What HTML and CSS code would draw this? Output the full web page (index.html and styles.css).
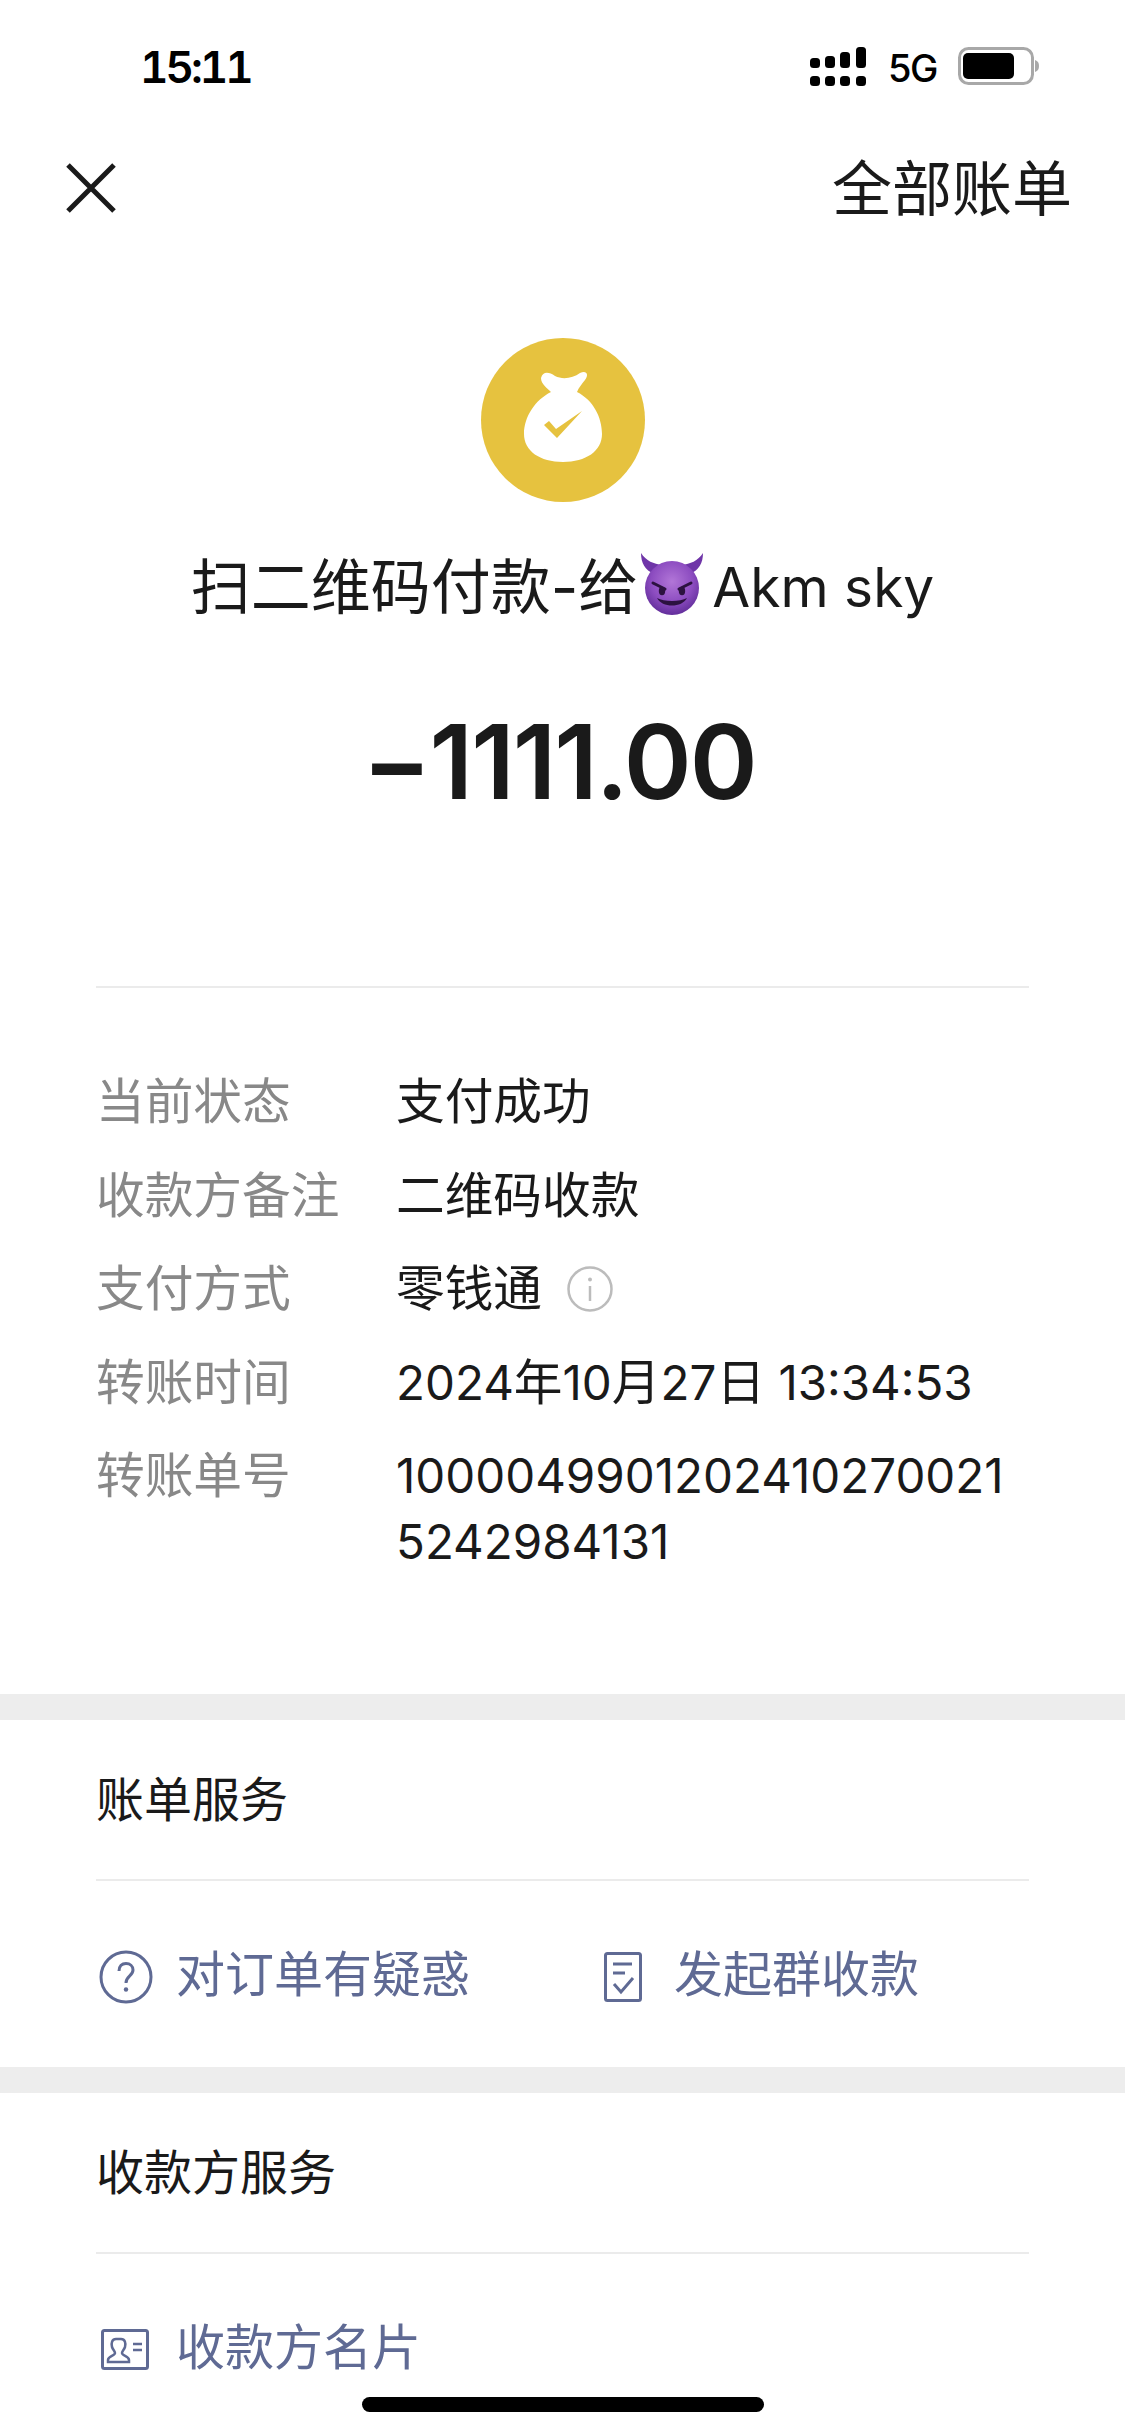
FILE: index.html
```html
<!DOCTYPE html>
<html lang="zh-CN">
<head>
<meta charset="utf-8">
<title>账单详情</title>
<link rel="stylesheet" href="styles.css">
</head>
<body>
<div class="page">
  <header class="status">
    <span class="time">15:11</span>
    <div class="status-right">
      <svg class="signal" width="58" height="40" viewBox="0 0 58 40">
        <g fill="#000">
          <rect x="0" y="11" width="10" height="10" rx="3.5"/><rect x="0" y="29" width="10" height="10" rx="3.5"/>
          <rect x="15" y="9" width="10" height="12" rx="3.5"/><rect x="15" y="29" width="10" height="10" rx="3.5"/>
          <rect x="30" y="5" width="10" height="16" rx="3.5"/><rect x="30" y="29" width="10" height="10" rx="3.5"/>
          <rect x="46" y="0" width="10" height="21" rx="3.5"/><rect x="46" y="29" width="10" height="10" rx="3.5"/>
        </g>
      </svg>
      <span class="net">5G</span>
      <svg class="battery" width="82" height="38" viewBox="0 0 82 38">
        <rect x="1.5" y="1.5" width="73" height="35" rx="9" fill="none" stroke="#a8a8a8" stroke-width="3"/>
        <rect x="5" y="6" width="51" height="26" rx="5" fill="#000"/>
        <path d="M77 13c3 1 4 3 4 6s-1 5-4 6z" fill="#a8a8a8"/>
      </svg>
    </div>
  </header>

  <nav class="nav">
    <svg class="close" width="50" height="50" viewBox="0 0 50 50">
      <path d="M2 2 48 48M48 2 2 48" stroke="#1a1a1a" stroke-width="5" fill="none"/>
    </svg>
    <span class="nav-link">全部账单</span>
  </nav>

  <section class="hero">
    <svg class="bag" width="164" height="164" viewBox="0 0 164 164">
      <circle cx="82" cy="82" r="82" fill="#e6c23f"/>
      <path d="M60 40C62 33 68 34 74 38 82 42 92 40 99 35 106 32 108 37 104 42 101 46 98 49 96 54 112 62 121 79 121 96 121 113 105 124 82 124 59 124 43 113 43 96 43 79 54 62 70 54 66 50 60 46 60 40Z" fill="#fff"/>
      <path d="M63 87 68 83 75 91 101 73 76 100Z" fill="#e6c23f"/>
    </svg>
    <h1 class="title">
      <span>扫二维码付款-给</span>
      <svg class="emoji" width="64" height="62" viewBox="0 0 64 62">
        <defs>
          <radialGradient id="face" cx="50%" cy="38%" r="65%">
            <stop offset="0" stop-color="#b276d8"/>
            <stop offset="0.6" stop-color="#8c4cc0"/>
            <stop offset="1" stop-color="#5d2a96"/>
          </radialGradient>
        </defs>
        <path d="M1 0C1 10 5 17 14 21L22 12C14 11 6 8 1 0ZM63 0C63 10 59 17 50 21L42 12C50 11 58 8 63 0Z" fill="#6f35a8"/>
        <ellipse cx="32" cy="35" rx="27" ry="27" fill="url(#face)"/>
        <path d="M13 30 25 36M51 30 39 36" stroke="#2c1240" stroke-width="3" stroke-linecap="round"/>
        <ellipse cx="22" cy="38" rx="3.2" ry="4.2" fill="#2c1240"/>
        <ellipse cx="42" cy="38" rx="3.2" ry="4.2" fill="#2c1240"/>
        <path d="M17 45C22 55 42 55 47 45 40 49 24 49 17 45Z" fill="#2c1240"/>
      </svg>
      <span class="title-latin">Akm sky</span>
    </h1>
    <div class="amount">−1111.00</div>
  </section>

  <section class="details">
    <dl class="info">
      <dt>当前状态</dt><dd>支付成功</dd>
      <dt>收款方备注</dt><dd>二维码收款</dd>
      <dt>支付方式</dt>
      <dd class="with-icon">零钱通
        <svg width="46" height="46" viewBox="0 0 46 46">
          <circle cx="23" cy="23" r="21.5" fill="none" stroke="#bcbcbc" stroke-width="2.5"/>
          <circle cx="23" cy="13.5" r="2" fill="#bcbcbc"/>
          <path d="M23 20v15" stroke="#bcbcbc" stroke-width="2.5"/>
        </svg>
      </dd>
      <dt>转账时间</dt><dd><span class="num">2024</span>年<span class="num">10</span>月<span class="num">27</span>日<span class="num"> 13:34:53</span></dd>
      <dt>转账单号</dt><dd class="num">10000499012024102700215242984131</dd>
    </dl>
  </section>

  <section class="service">
    <h2 class="service-title">账单服务</h2>
    <div class="actions">
      <a class="action">
        <svg width="54" height="54" viewBox="0 0 54 54">
          <circle cx="27" cy="27" r="25" fill="none" stroke="#5f6a94" stroke-width="3"/>
          <path d="M20 21C20 16 23 13.500 27 13.500 31 13.500 34 16 34 20 34 26 27 26 27 33" fill="none" stroke="#5f6a94" stroke-width="3"/>
          <circle cx="27" cy="39.500" r="2.200" fill="#5f6a94"/>
        </svg>
        <span>对订单有疑惑</span>
      </a>
      <a class="action">
        <svg class="icon-doc" width="38" height="50" viewBox="0 0 38 50">
          <rect x="1.500" y="1.500" width="35" height="47" rx="2" fill="none" stroke="#5f6a94" stroke-width="3"/>
          <path d="M9 12H28M9 21H21M10 32 17 40 29 26" fill="none" stroke="#5f6a94" stroke-width="3"/>
        </svg>
        <span>发起群收款</span>
      </a>
    </div>
  </section>

  <section class="service">
    <h2 class="service-title">收款方服务</h2>
    <div class="actions">
      <a class="action">
        <svg class="icon-card" width="48" height="41" viewBox="0 0 48 41">
          <rect x="1.500" y="1.500" width="45" height="38" rx="2" fill="none" stroke="#5f6a94" stroke-width="3"/>
          <path d="M15 10C11 10 10 14 11 18 12 21 14 22 14 24 14 27 7 27 7 31V33H28V31C28 27 21 27 21 24 21 22 23 21 24 18 25 14 24 10 20 10Z" fill="none" stroke="#5f6a94" stroke-width="2.500"/>
          <path d="M32 15H41M32 21H41" stroke="#5f6a94" stroke-width="2.500"/>
        </svg>
        <span>收款方名片</span>
      </a>
    </div>
  </section>

  <div class="home-bar"></div>
</div>
</body>
</html>
```

FILE: styles.css
```css
* { box-sizing: border-box; }
html, body { margin: 0; padding: 0; background: #fff; }
.page {
  position: relative;
  width: 1125px;
  height: 2436px;
  overflow: hidden;
  background: #fff;
  color: #1a1a1a;
  font-family: Inter, "Noto Sans CJK SC", sans-serif;
}

.status {
  height: 134px;
  padding: 47px 85px 0 140px;
  display: flex;
  justify-content: space-between;
  align-items: flex-start;
  color: #000;
}
.time {
  font-size: 44px;
  line-height: 40px;
  font-weight: 600;
  font-variant-numeric: tabular-nums;
  letter-spacing: -3px;
}
.status-right { display: flex; align-items: flex-start; }
.signal { display: block; margin-right: -2px; }
.net {
  margin: 6px 0 0 22px;
  width: 52px;
  font-size: 38px;
  line-height: 30px;
  font-weight: 500;
  letter-spacing: -1.5px;
}
.battery { display: block; margin-left: 18px; }

.nav {
  height: 110px;
  padding: 0 53px 0 66px;
  display: flex;
  justify-content: space-between;
  align-items: center;
}
.close { display: block; margin-top: -2px; }
.nav-link { font-size: 60px; line-height: 80px; font-weight: 400; }

.hero {
  height: 744px;
  padding-top: 94px;
  margin: 0 96px;
  border-bottom: 2px solid #ebebeb;
  display: flex;
  flex-direction: column;
  align-items: center;
}
.bag { display: block; flex: none; }
.title {
  margin: 45px 0 0;
  display: flex;
  align-items: center;
  justify-content: center;
  height: 80px;
  font-size: 60px;
  line-height: 80px;
  font-weight: 400;
  white-space: nowrap;
}
.emoji { display: block; margin: -7px 8px 0 2px; }
.title-latin { font-size: 55px; }
.amount {
  margin: 75px 7px 0 0;
  font-size: 103px;
  line-height: 120px;
  font-weight: 600;
  letter-spacing: -2px;
}

.details { height: 706px; padding: 81px 96px 0; }
.info {
  margin: 0;
  display: grid;
  grid-template-columns: 300px 1fr;
  row-gap: 27.5px;
  font-size: 48.7px;
  line-height: 66px;
}
.info dt { color: #888; }
.info dd { margin: 0; word-break: break-all; }
.num { font-size: 47.5px; }
.with-icon { display: flex; align-items: center; gap: 25px; }
.with-icon svg { display: block; }

.service { border-top: 26px solid #ededed; }
.service-title {
  margin: 0 96px;
  height: 161px;
  border-bottom: 2px solid #ebebeb;
  font-size: 48px;
  line-height: 159px;
  font-weight: 400;
}
.actions {
  height: 186px;
  padding: 5px 96px 0;
  display: grid;
  grid-template-columns: 508px 1fr;
  align-items: center;
}
.action {
  display: flex;
  align-items: center;
  gap: 23px;
  color: #5f6a94;
  font-size: 49px;
  line-height: 60px;
}
.action span { position: relative; top: -2px; }
.action svg { display: block; flex: none; margin-left: 3px; }
.action .icon-doc { margin-left: 0; margin-right: 9px; }
.action .icon-card { margin-left: 5px; margin-right: 4px; }

.home-bar {
  position: absolute;
  left: 362px;
  top: 2397px;
  width: 402px;
  height: 15px;
  border-radius: 8px;
  background: #000;
}
```
